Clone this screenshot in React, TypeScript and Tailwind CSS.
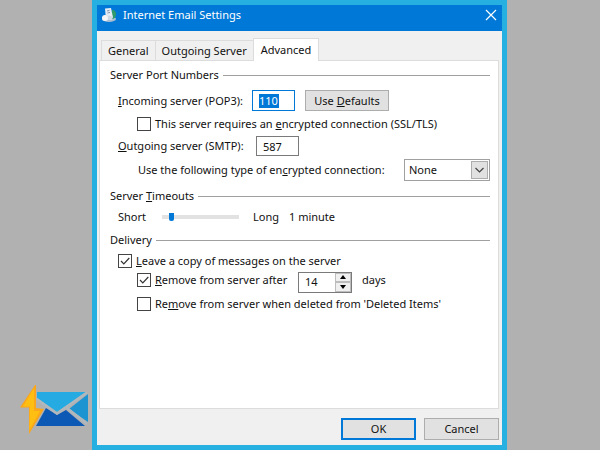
import type { ReactNode } from 'react'

const TABS = ['General', 'Outgoing Server', 'Advanced']

function Key({ children }: { children: ReactNode }) {
    return <span className="underline underline-offset-1">{children}</span>
}

function SectionTitle({ children }: { children: ReactNode }) {
    return (
        <h2 className="flex h-4 items-center gap-1 whitespace-nowrap">
            {children}
            <span className="h-px flex-1 bg-[#a0a0a0]" />
        </h2>
    )
}

function CheckOption({ id, checked, children }: { id: string; checked?: boolean; children: ReactNode }) {
    return (
        <div className="flex h-4 items-center gap-1 whitespace-nowrap">
            <span className="relative size-3.5 shrink-0">
                <input
                    id={id}
                    type="checkbox"
                    defaultChecked={checked}
                    className="peer block size-3.5 appearance-none border border-[#444] bg-white"
                />
                <svg
                    viewBox="0 0 14 14"
                    className="pointer-events-none absolute inset-0 hidden size-3.5 peer-checked:block"
                    fill="none"
                    stroke="#333"
                    strokeWidth="1.2"
                >
                    <path d="M3 7l2.8 2.8L11.3 4" />
                </svg>
            </span>
            <label htmlFor={id}>{children}</label>
        </div>
    )
}

function DialogIcon() {
    return (
        <svg viewBox="0 0 16 16" className="size-4" aria-hidden="true">
            <ellipse cx="8" cy="12" rx="7" ry="3" fill="#a9bdd3" />
            <path d="M11 3c3 0 4 2 4 4.500S13 12 11 12z" fill="#2f9b6b" />
            <path d="M4 1.500L10 1l2 9.500L5 12z" fill="#e6ecf3" />
            <path d="M1 11l3-3 8 1.500L11 13H4z" fill="#cfd9e4" />
            <path d="M6 4l2.500-.6M6.500 6l2.500-.6" stroke="#8296ad" strokeWidth="1" />
            <circle cx="4" cy="11" r="3" fill="#f4f6f8" />
        </svg>
    )
}

function MailLogo() {
    return (
        <svg viewBox="0 0 68 50" className="h-[50px] w-[68px]" aria-label="Mail">
            <path d="M17 8h49L37 28 17 14z" fill="#25abe2" />
            <path d="M68 10v28L49 25z" fill="#1c94d2" />
            <path d="M16 42l10-18 11 7 9-5 19 16z" fill="#0b59b5" />
            <path d="M16 14.500L37 29.500 67 8.500M47 24l20 16" fill="none" stroke="#b0b8bd" strokeWidth="2.500" />
            <path d="M15 1L0 23.500h9L9 50l15-25-8-1V1z" fill="#fba71b" />
            <path d="M14 4L3 22.500h7L9.500 46 20 27h-6z" fill="#ffbf12" />
        </svg>
    )
}

export default function App() {
    return (
        <div className="grid min-h-screen grid-cols-[92px_minmax(0,1fr)_93px] bg-[#b1b1b1] font-['Noto_Sans',sans-serif] text-[11px] leading-4 text-[#111]">
            <div className="flex items-end justify-end pr-1 pb-4">
                <MailLogo />
            </div>

            <main className="flex flex-col border-5 border-[#25b0e1] bg-[#f0f0f0]">
                <header className="flex h-[26px] items-center gap-1.5 bg-[#0078d7] pr-1 pb-1.5 pl-1 text-white">
                    <DialogIcon />
                    <h1 className="flex-1">Internet Email Settings</h1>
                    <button type="button" aria-label="Close" className="p-px">
                        <svg viewBox="0 0 12 12" className="size-3" fill="none" stroke="white" strokeWidth="1.2">
                            <path d="M1 1l10 10M11 1L1 11" />
                        </svg>
                    </button>
                </header>

                <div className="flex flex-1 flex-col pt-[7px] pr-[3px] pl-[2px]">
                    <div role="tablist" className="flex items-end pl-0.5">
                        {TABS.map((tab) => (
                            <button
                                key={tab}
                                type="button"
                                role="tab"
                                aria-selected={tab === 'Advanced'}
                                className="h-5 border border-r-0 border-b-0 border-[#dcdcdc] bg-[#f0f0f0] px-1.5 whitespace-nowrap aria-selected:z-10 aria-selected:-mb-px aria-selected:h-[23px] aria-selected:border-r aria-selected:bg-white aria-selected:px-[7px]"
                            >
                                {tab}
                            </button>
                        ))}
                    </div>

                    <section role="tabpanel" className="flex-1 border border-[#dcdcdc] bg-white pt-1.5 pr-2 pl-[10px]">
                        <SectionTitle>Server Port Numbers</SectionTitle>
                        <div className="mt-[7px] flex h-[21px] items-center pl-2">
                            <label htmlFor="incoming" className="w-[134px] whitespace-nowrap">
                                <Key>I</Key>ncoming server (POP3):
                            </label>
                            <div className="flex h-[21px] w-[43px] items-center border border-[#0078d7] bg-white pl-1.5">
                                <input
                                    id="incoming"
                                    defaultValue="110"
                                    className="h-3.5 w-5 bg-[#0078d7] text-white outline-none"
                                />
                            </div>
                            <button type="button" className="ml-2.5 h-[21px] w-[84px] border border-[#adadad] bg-[#e1e1e1]">
                                Use <Key>D</Key>efaults
                            </button>
                        </div>
                        <div className="mt-[5px] pl-[27px]">
                            <CheckOption id="ssl">
                                This server requires an <Key>e</Key>ncrypted connection (SSL/TLS)
                            </CheckOption>
                        </div>
                        <div className="mt-1 flex h-5 items-center pl-2">
                            <label htmlFor="outgoing" className="w-[138px] whitespace-nowrap">
                                <Key>O</Key>utgoing server (SMTP):
                            </label>
                            <input
                                id="outgoing"
                                defaultValue="587"
                                className="h-5 w-[43px] border border-[#7a7a7a] bg-white pl-1.5 outline-none"
                            />
                        </div>
                        <div className="mt-[3px] flex h-[22px] items-center justify-between pl-7">
                            <label htmlFor="encryption" className="whitespace-nowrap">
                                Use the following type of en<Key>c</Key>rypted connection:
                            </label>
                            <div className="relative h-[22px] w-[86px]">
                                <select
                                    id="encryption"
                                    className="size-full appearance-none border border-[#a0a0a0] bg-white pl-1"
                                >
                                    <option>None</option>
                                </select>
                                <span className="pointer-events-none absolute inset-y-0.5 right-0.5 flex w-[17px] items-center justify-center border border-[#adadad] bg-[#e1e1e1]">
                                    <svg viewBox="0 0 9 6" className="h-1.5 w-[9px]" fill="none" stroke="#444" strokeWidth="1.2">
                                        <path d="M.5 1l4 4 4-4" />
                                    </svg>
                                </span>
                            </div>
                        </div>

                        <div className="mt-[7px]">
                            <SectionTitle>
                                <label htmlFor="timeout">
                                    Server <Key>T</Key>imeouts
                                </label>
                            </SectionTitle>
                        </div>
                        <div className="mt-[5px] flex h-4 items-center pl-2">
                            <span className="w-11">Short</span>
                            <input
                                id="timeout"
                                type="range"
                                min="0"
                                max="10"
                                defaultValue="1"
                                className="h-1 w-[77px] appearance-none bg-[#e2e2e2] [&::-webkit-slider-thumb]:h-2 [&::-webkit-slider-thumb]:w-[5px] [&::-webkit-slider-thumb]:appearance-none [&::-webkit-slider-thumb]:rounded-b-xs [&::-webkit-slider-thumb]:bg-[#0078d7]"
                            />
                            <span className="ml-3.5 w-9">Long</span>
                            <output htmlFor="timeout">1 minute</output>
                        </div>

                        <div className="mt-[7px]">
                            <SectionTitle>Delivery</SectionTitle>
                        </div>
                        <div className="mt-[5px] pl-2">
                            <CheckOption id="leave-copy" checked>
                                <Key>L</Key>eave a copy of messages on the server
                            </CheckOption>
                        </div>
                        <div className="mt-0.5 flex h-[22px] items-center pl-[27px]">
                            <div className="w-[161px] pb-1">
                                <CheckOption id="remove-after" checked>
                                    <Key>R</Key>emove from server after
                                </CheckOption>
                            </div>
                            <div className="flex h-[21px] w-[54px] border border-[#7a7a7a] bg-white">
                                <input
                                    id="days"
                                    aria-label="Days"
                                    defaultValue="14"
                                    className="w-0 flex-1 pl-1.5 outline-none"
                                />
                                <div className="flex w-4 flex-col">
                                    <button
                                        type="button"
                                        aria-label="More days"
                                        className="flex flex-1 items-center justify-center border border-[#bdbdbd] bg-[#f0f0f0]"
                                    >
                                        <svg viewBox="0 0 6 4" className="h-1 w-1.5">
                                            <path d="M0 4l3-4 3 4z" />
                                        </svg>
                                    </button>
                                    <button
                                        type="button"
                                        aria-label="Fewer days"
                                        className="flex flex-1 items-center justify-center border border-[#bdbdbd] bg-[#f0f0f0]"
                                    >
                                        <svg viewBox="0 0 6 4" className="h-1 w-1.5">
                                            <path d="M0 0l3 4 3-4z" />
                                        </svg>
                                    </button>
                                </div>
                            </div>
                            <label htmlFor="days" className="ml-2.5 pb-1">
                                days
                            </label>
                        </div>
                        <div className="mt-[3px] pl-[27px]">
                            <CheckOption id="remove-deleted">
                                Re<Key>m</Key>ove from server when deleted from 'Deleted Items'
                            </CheckOption>
                        </div>
                    </section>

                    <footer className="flex justify-end gap-2 pt-[9px] pb-[5px]">
                        <button type="button" className="h-[22px] w-[75px] border-2 border-[#0078d7] bg-[#e1e1e1]">
                            OK
                        </button>
                        <button type="button" className="h-[22px] w-[75px] border border-[#adadad] bg-[#e1e1e1]">
                            Cancel
                        </button>
                    </footer>
                </div>
            </main>
        </div>
    )
}
